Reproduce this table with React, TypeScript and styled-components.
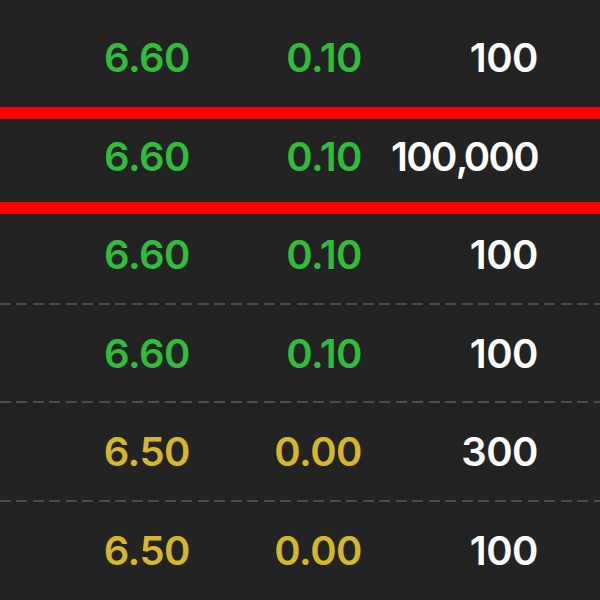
import React from "react";
import styled, { createGlobalStyle } from "styled-components";

const Global = createGlobalStyle`
  html, body {
    margin: 0;
    padding: 0;
    background: #232323;
    overflow: hidden;
  }
  body {
    font-family: Inter, "Noto Sans", sans-serif;
  }
`;

const Table = styled.div`
  width: 600px;
  height: 600px;
  overflow: hidden;
  padding-top: 9px;
  box-sizing: border-box;
  background: #232323;
`;

const Row = styled.div<{ $divider: boolean }>`
  position: relative;
  height: 98.5px;
  display: grid;
  grid-template-columns: 190px 172px 176px 1fr;
  align-items: center;
  justify-items: end;
  background-image: ${(p) =>
    p.$divider
      ? "repeating-linear-gradient(to right, #4d4d4d 0 11px, transparent 11px 16.5px)"
      : "none"};
  background-size: 100% 2px;
  background-position: left bottom;
  background-repeat: no-repeat;
`;

const Cell = styled.span<{ $tone: "up" | "flat" | "plain"; $tight?: boolean }>`
  font-size: 40px;
  font-weight: 600;
  letter-spacing: ${(p) => (p.$tight ? "-1.6px" : "-0.5px")};
  line-height: 1;
  color: ${(p) =>
    p.$tone === "up" ? "#31bc3b" : p.$tone === "flat" ? "#d6b62c" : "#ffffff"};
`;

const Sep = styled.span`
  letter-spacing: -5px;
`;

const Highlight = styled.div`
  position: absolute;
  left: 0;
  right: 0;
  top: -0.5px;
  height: 107px;
  box-sizing: border-box;
  border-top: 12px solid #ff0000;
  border-bottom: 12px solid #ff0000;
  pointer-events: none;
  z-index: 2;
`;

type Quote = {
  price: string;
  change: string;
  volume: string;
  tone: "up" | "flat";
  highlighted?: boolean;
};

const quotes: Quote[] = [
  { price: "6.60", change: "0.10", volume: "100", tone: "up" },
  { price: "6.60", change: "0.10", volume: "100,000", tone: "up", highlighted: true },
  { price: "6.60", change: "0.10", volume: "100", tone: "up" },
  { price: "6.60", change: "0.10", volume: "100", tone: "up" },
  { price: "6.50", change: "0.00", volume: "300", tone: "flat" },
  { price: "6.50", change: "0.00", volume: "100", tone: "flat" },
];

function Volume({ value }: { value: string }) {
  const parts = value.split(",");
  return (
    <Cell $tone="plain" $tight={parts.length > 1}>
      {parts.map((p, i) => (
        <React.Fragment key={i}>
          {i > 0 && <Sep>,</Sep>}
          {p}
        </React.Fragment>
      ))}
    </Cell>
  );
}

export default function App() {
  return (
    <>
      <Global />
      <Table>
        {quotes.map((q, i) => (
          <Row key={i} $divider={i >= 2 && i < quotes.length - 1}>
            <Cell $tone={q.tone}>{q.price}</Cell>
            <Cell $tone={q.tone}>{q.change}</Cell>
            <Volume value={q.volume} />
            {q.highlighted && <Highlight />}
          </Row>
        ))}
      </Table>
    </>
  );
}
